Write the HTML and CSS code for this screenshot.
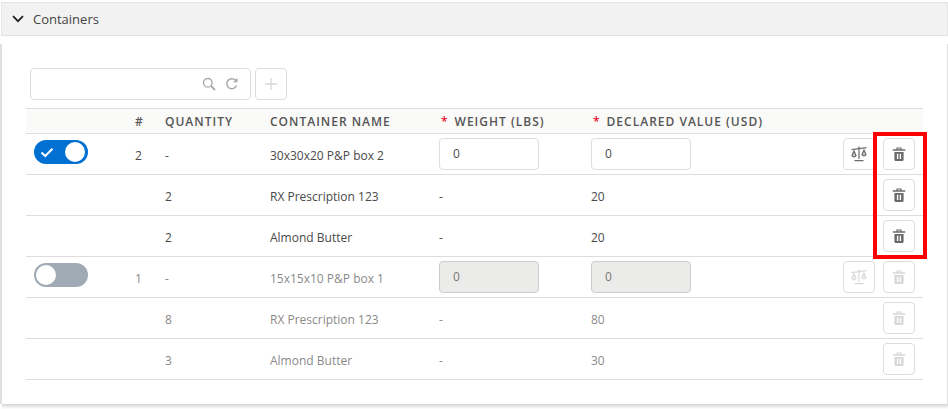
FILE: index.html
```html
<!DOCTYPE html>
<html lang="en">
<head>
  <meta charset="UTF-8">
  <title>Containers</title>
  <link rel="stylesheet" href="styles.css">
</head>
<body>
  <svg class="sprites" width="0" height="0">
    <symbol id="trash" viewBox="0 0 14 14">
      <path d="M.8 2.200h12.400v1.500H.8zM4.400 2.200V.4h5.200v1.800H8.400V1.500H5.600v.7z" fill="currentColor"/>
      <path fill-rule="evenodd" d="M2.400 5h9.200v7.500c0 .9-.6 1.500-1.400 1.500H3.800c-.8 0-1.400-.6-1.400-1.500zM4.900 6.800v5.200h1.400V6.800zM7.700 6.800v5.200h1.400V6.800z" fill="currentColor"/>
    </symbol>
    <symbol id="scale" viewBox="0 0 16 16">
      <path d="M7.400.5h1.200V13H7.400zM3.500 14h9v1.200h-9z" fill="currentColor"/>
      <path d="M.5 3 15.500 1v1.300L.5 4.300z" fill="currentColor"/>
      <path d="M3 5 1 9.500a2.200 2.200 0 0 0 4 0zM13 4 11 8.500a2.200 2.200 0 0 0 4 0z" fill="currentColor" fill-opacity="0.35" stroke="currentColor" stroke-width="1.200"/>
    </symbol>
  </svg>

  <section class="panel">
    <header class="panel-head">
      <svg class="chevron" width="12" height="8" viewBox="0 0 12 8"><path d="M1 1.200 6 6.200l5-5" fill="none" stroke="currentColor" stroke-width="1.800"/></svg>
      <span>Containers</span>
    </header>
    <div class="panel-body">
      <div class="toolbar">
        <div class="search">
          <svg width="14" height="14" viewBox="0 0 14 14"><circle cx="5.800" cy="5.800" r="4.300" fill="none" stroke="currentColor" stroke-width="1.400"/><path d="M9 9l4 4" stroke="currentColor" stroke-width="1.800"/></svg>
          <svg width="14" height="14" viewBox="0 0 14 14"><path d="M11.500 8.500A5 5 0 1 1 10.500 3.300" fill="none" stroke="currentColor" stroke-width="1.500"/><path d="M12.500.800v4.400H8.100z" fill="currentColor"/></svg>
        </div>
        <button class="icon-btn is-off">
          <svg width="14" height="14" viewBox="0 0 14 14"><path d="M7 1v12M1 7h12" stroke="currentColor" stroke-width="1.300"/></svg>
        </button>
      </div>

      <table class="grid">
        <colgroup>
          <col class="c-toggle"><col class="c-num"><col class="c-qty"><col class="c-name"><col class="c-weight"><col class="c-value"><col class="c-scale"><col class="c-trash">
        </colgroup>
        <thead>
          <tr>
            <th></th>
            <th>#</th>
            <th>Quantity</th>
            <th>Container name</th>
            <th><i>*</i>Weight (lbs)</th>
            <th><i>*</i>Declared value (USD)</th>
            <th></th>
            <th></th>
          </tr>
        </thead>
        <tbody>
          <tr>
            <td class="toggle-cell"><span class="toggle on"><svg width="14" height="11" viewBox="0 0 14 11"><path d="M1.500 5.500 5.200 9 12.500 1.800" fill="none" stroke="#fff" stroke-width="2"/></svg><b></b></span></td>
            <td class="txt">2</td>
            <td class="txt">-</td>
            <td class="txt">30x30x20 P&amp;P box 2</td>
            <td><span class="field">0</span></td>
            <td><span class="field">0</span></td>
            <td><button class="icon-btn"><svg width="16" height="16"><use href="#scale"/></svg></button></td>
            <td><button class="icon-btn"><svg width="14" height="14"><use href="#trash"/></svg></button></td>
          </tr>
          <tr>
            <td></td><td></td>
            <td class="txt">2</td>
            <td class="txt">RX Prescription 123</td>
            <td class="txt">-</td>
            <td class="txt">20</td>
            <td></td>
            <td><button class="icon-btn"><svg width="14" height="14"><use href="#trash"/></svg></button></td>
          </tr>
          <tr>
            <td></td><td></td>
            <td class="txt">2</td>
            <td class="txt">Almond Butter</td>
            <td class="txt">-</td>
            <td class="txt">20</td>
            <td></td>
            <td><button class="icon-btn"><svg width="14" height="14"><use href="#trash"/></svg></button></td>
          </tr>
          <tr class="off">
            <td class="toggle-cell"><span class="toggle"><b></b></span></td>
            <td class="txt">1</td>
            <td class="txt">-</td>
            <td class="txt">15x15x10 P&amp;P box 1</td>
            <td><span class="field is-off">0</span></td>
            <td><span class="field is-off">0</span></td>
            <td><button class="icon-btn is-off"><svg width="16" height="16"><use href="#scale"/></svg></button></td>
            <td><button class="icon-btn is-off"><svg width="14" height="14"><use href="#trash"/></svg></button></td>
          </tr>
          <tr class="off">
            <td></td><td></td>
            <td class="txt">8</td>
            <td class="txt">RX Prescription 123</td>
            <td class="txt">-</td>
            <td class="txt">80</td>
            <td></td>
            <td><button class="icon-btn is-off"><svg width="14" height="14"><use href="#trash"/></svg></button></td>
          </tr>
          <tr class="off">
            <td></td><td></td>
            <td class="txt">3</td>
            <td class="txt">Almond Butter</td>
            <td class="txt">-</td>
            <td class="txt">30</td>
            <td></td>
            <td><button class="icon-btn is-off"><svg width="14" height="14"><use href="#trash"/></svg></button></td>
          </tr>
        </tbody>
      </table>
      <div class="highlight"></div>
    </div>
    <div class="panel-foot"></div>
  </section>
</body>
</html>
```
FILE: styles.css
```css
body {
  margin: 0;
  padding: 2px 0 0;
  background: #fff;
  color: #4a4a4a;
  font-family: "Open Sans", sans-serif;
  font-size: 12px;
}
.sprites {
  display: block;
}
.panel-head {
  display: flex;
  align-items: center;
  gap: 9px;
  height: 32px;
  padding-left: 10px;
  margin: 0 0 0 1px;
  background: #f2f2f2;
  border-top: 1px solid #dfe3e8;
  border-bottom: 1px solid #dfe3e8;
  border-left: 1px solid #e6e8ea;
  border-right: 1px solid #e6e8ea;
  font-size: 13px;
  color: #444;
}
.chevron {
  color: #222;
}
.panel-body {
  position: relative;
  height: 368px;
  padding: 32px 25px 0 26px;
  box-sizing: border-box;
  background:
    linear-gradient(#e0e0e0, #e0e0e0) 0 8px / 2px 100% no-repeat,
    linear-gradient(#e0e0e0, #e0e0e0) 100% 8px / 1px 100% no-repeat;
}
.panel-foot {
  height: 5px;
  margin-left: 2px;
  background: linear-gradient(#d4d4d4, #fff);
}
.toolbar {
  display: flex;
  gap: 4px;
  padding-left: 4px;
  margin-bottom: 8px;
}
.search {
  display: flex;
  justify-content: flex-end;
  align-items: center;
  gap: 9px;
  width: 221px;
  height: 32px;
  padding-right: 11px;
  box-sizing: border-box;
  border: 1px solid #ddd;
  border-radius: 4px;
  color: #aaa;
}
.icon-btn {
  display: inline-flex;
  justify-content: center;
  align-items: center;
  width: 32px;
  height: 32px;
  padding: 0;
  background: #fff;
  border: 1px solid #ddd;
  border-radius: 4px;
  color: #6a6a6a;
  vertical-align: middle;
}
.icon-btn.is-off {
  color: #d8d8d8;
}
.grid {
  width: 897px;
  table-layout: fixed;
  border-collapse: collapse;
}
.c-toggle { width: 109px; }
.c-num { width: 30px; }
.c-qty { width: 105px; }
.c-name { width: 169px; }
.c-weight { width: 152px; }
.c-value { width: 252px; }
.c-scale { width: 40px; }
.c-trash { width: 40px; }
.grid th {
  height: 24px;
  padding: 0;
  background: #fafaf8;
  border-top: 1px solid #ddd;
  border-bottom: 1px solid #ddd;
  color: #555;
  font-size: 12px;
  font-weight: 600;
  letter-spacing: 1px;
  text-align: left;
  text-transform: uppercase;
}
.grid th i {
  margin: 0 7px 0 2px;
  color: #e8112d;
  font-style: normal;
  letter-spacing: 0;
}
.grid td {
  height: 41px;
  padding: 0;
  box-sizing: border-box;
  border-bottom: 1px solid #ddd;
  font-size: 12px;
}
.grid td.txt {
  padding-top: 2px;
}
.grid td.toggle-cell {
  padding-bottom: 4px;
}
.off .txt {
  opacity: 0.65;
}
.toggle {
  display: flex;
  align-items: center;
  justify-content: flex-start;
  width: 54px;
  height: 24px;
  margin-left: 8px;
  padding: 0 2px;
  box-sizing: border-box;
  border-radius: 12px;
  background: #a0aab4;
}
.toggle b {
  width: 20px;
  height: 20px;
  border-radius: 50%;
  background: #fff;
}
.toggle.on {
  justify-content: space-between;
  padding: 0 3px 0 6px;
  background: #0070d2;
}
.field {
  display: block;
  width: 100px;
  height: 32px;
  padding-left: 13px;
  box-sizing: border-box;
  border: 1px solid #ddd;
  border-radius: 4px;
  background: #fff;
  line-height: 30px;
}
.field.is-off {
  background: #ebebe9;
  border-color: #ccc;
  color: #777;
}
.highlight {
  position: absolute;
  left: 873px;
  top: 96px;
  width: 46px;
  height: 119px;
  border: 4px solid #f00;
}
```
